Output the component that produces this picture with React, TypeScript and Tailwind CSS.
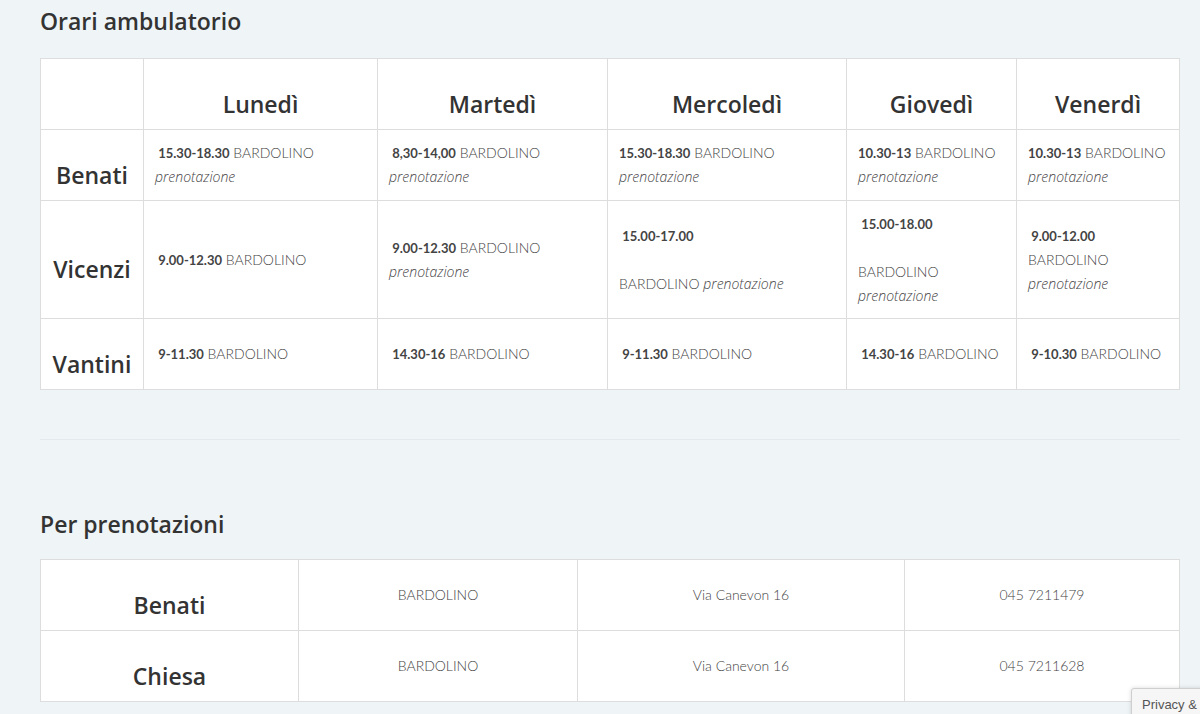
import React from "react";

const days = ["Lunedì", "Martedì", "Mercoledì", "Giovedì", "Venerdì"];

const T = ({ t }: { t: string }) => <b className="font-bold text-[13px]">{t}</b>;
const P = () => <i className="font-['Open_Sans',sans-serif] font-light text-[14px]">prenotazione</i>;

const schedule: { name: string; h: string; slots: React.ReactNode[] }[] = [
  {
    name: "Benati",
    h: "h-[71px]",
    slots: [
      <><T t=" 15.30-18.30" /> BARDOLINO<br /><P /></>,
      <><T t=" 8,30-14,00" /> BARDOLINO<br /><P /></>,
      <><T t="15.30-18.30" /> BARDOLINO<br /><P /></>,
      <><T t="10.30-13" /> BARDOLINO<br /><P /></>,
      <><T t="10.30-13" /> BARDOLINO<br /><P /></>,
    ],
  },
  {
    name: "Vicenzi",
    h: "h-[118px]",
    slots: [
      <><T t=" 9.00-12.30" /> BARDOLINO</>,
      <><T t=" 9.00-12.30" /> BARDOLINO<br /><P /></>,
      <><T t=" 15.00-17.00" /><br /><br />BARDOLINO <P /></>,
      <><T t=" 15.00-18.00" /><br /><br />BARDOLINO<br /><P /></>,
      <><T t=" 9.00-12.00" /><br />BARDOLINO<br /><P /></>,
    ],
  },
  {
    name: "Vantini",
    h: "h-[71px]",
    slots: [
      <><T t=" 9-11.30" /> BARDOLINO</>,
      <><T t=" 14.30-16" /> BARDOLINO</>,
      <><T t=" 9-11.30" /> BARDOLINO</>,
      <><T t=" 14.30-16" /> BARDOLINO</>,
      <><T t=" 9-10.30" /> BARDOLINO</>,
    ],
  },
];

const bookings = [
  { name: "Benati", place: "BARDOLINO", addr: "Via Canevon 16", tel: "045 7211479" },
  { name: "Chiesa", place: "BARDOLINO", addr: "Via Canevon 16", tel: "045 7211628" },
];

const cell = "border border-[#dddddd] bg-white";
const head = "font-['Open_Sans',sans-serif] font-semibold text-[#333]";

export default function App() {
  return (
    <div className="relative min-h-[714px] w-[1200px] overflow-hidden bg-[#eff4f7] pl-10 text-[#333] font-['Lato','Liberation_Sans',sans-serif]">
      <h2 className={`${head} pt-[6px] text-[23px] leading-[30px]`}>Orari ambulatorio</h2>

      <table className="mt-[22px] w-[1139px] border-collapse table-fixed">
        <colgroup>
          <col className="w-[103px]" />
          <col className="w-[234px]" />
          <col className="w-[230px]" />
          <col className="w-[239px]" />
          <col className="w-[170px]" />
          <col className="w-[163px]" />
        </colgroup>
        <thead>
          <tr className="h-[71px]">
            <th className={cell}></th>
            {days.map(d => (
              <th key={d} className={`${cell} ${head} pt-[20px] text-center text-[23px]`}>{d}</th>
            ))}
          </tr>
        </thead>
        <tbody>
          {schedule.map(r => (
            <tr key={r.name} className={r.h}>
              <td className={`${cell} ${head} pt-[20px] text-center text-[23px] font-bold`}>{r.name}</td>
              {r.slots.map((s, i) => (
                <td key={i} className={`${cell} px-[11px] align-middle text-[14px] leading-[24px] font-light text-[#444] whitespace-pre-wrap`}>{s}</td>
              ))}
            </tr>
          ))}
        </tbody>
      </table>

      <div className="mt-[49px] h-px w-[1140px] bg-[#e3e9ec]" />

      <h2 className={`${head} mt-[69px] text-[23px] leading-[30px]`}>Per prenotazioni</h2>

      <table className="mt-[20px] w-[1139px] border-collapse table-fixed">
        <colgroup>
          <col className="w-[258px]" />
          <col className="w-[279px]" />
          <col className="w-[327px]" />
          <col className="w-[275px]" />
        </colgroup>
        <tbody>
          {bookings.map(b => (
            <tr key={b.name} className="h-[71px]">
              <td className={`${cell} ${head} pt-[20px] text-center text-[23px] font-bold`}>{b.name}</td>
              <td className={`${cell} pb-[2px] text-center text-[14px] font-light text-[#444]`}>{b.place}</td>
              <td className={`${cell} pb-[2px] text-center text-[14px] font-light text-[#444]`}>{b.addr}</td>
              <td className={`${cell} pb-[2px] text-center text-[14px] font-light text-[#444]`}>{b.tel}</td>
            </tr>
          ))}
        </tbody>
      </table>

      <div className="absolute left-[1131px] top-[688px] h-[30px] w-[100px] rounded-tl-[3px] border border-[#cfcfcf] bg-[#f6f6f6] pl-[10px] pt-[6px] text-[13px] text-[#555] font-['Liberation_Sans',sans-serif] shadow-[0_0_4px_rgba(0,0,0,0.15)]">
        Privacy &amp;
      </div>
    </div>
  );
}
